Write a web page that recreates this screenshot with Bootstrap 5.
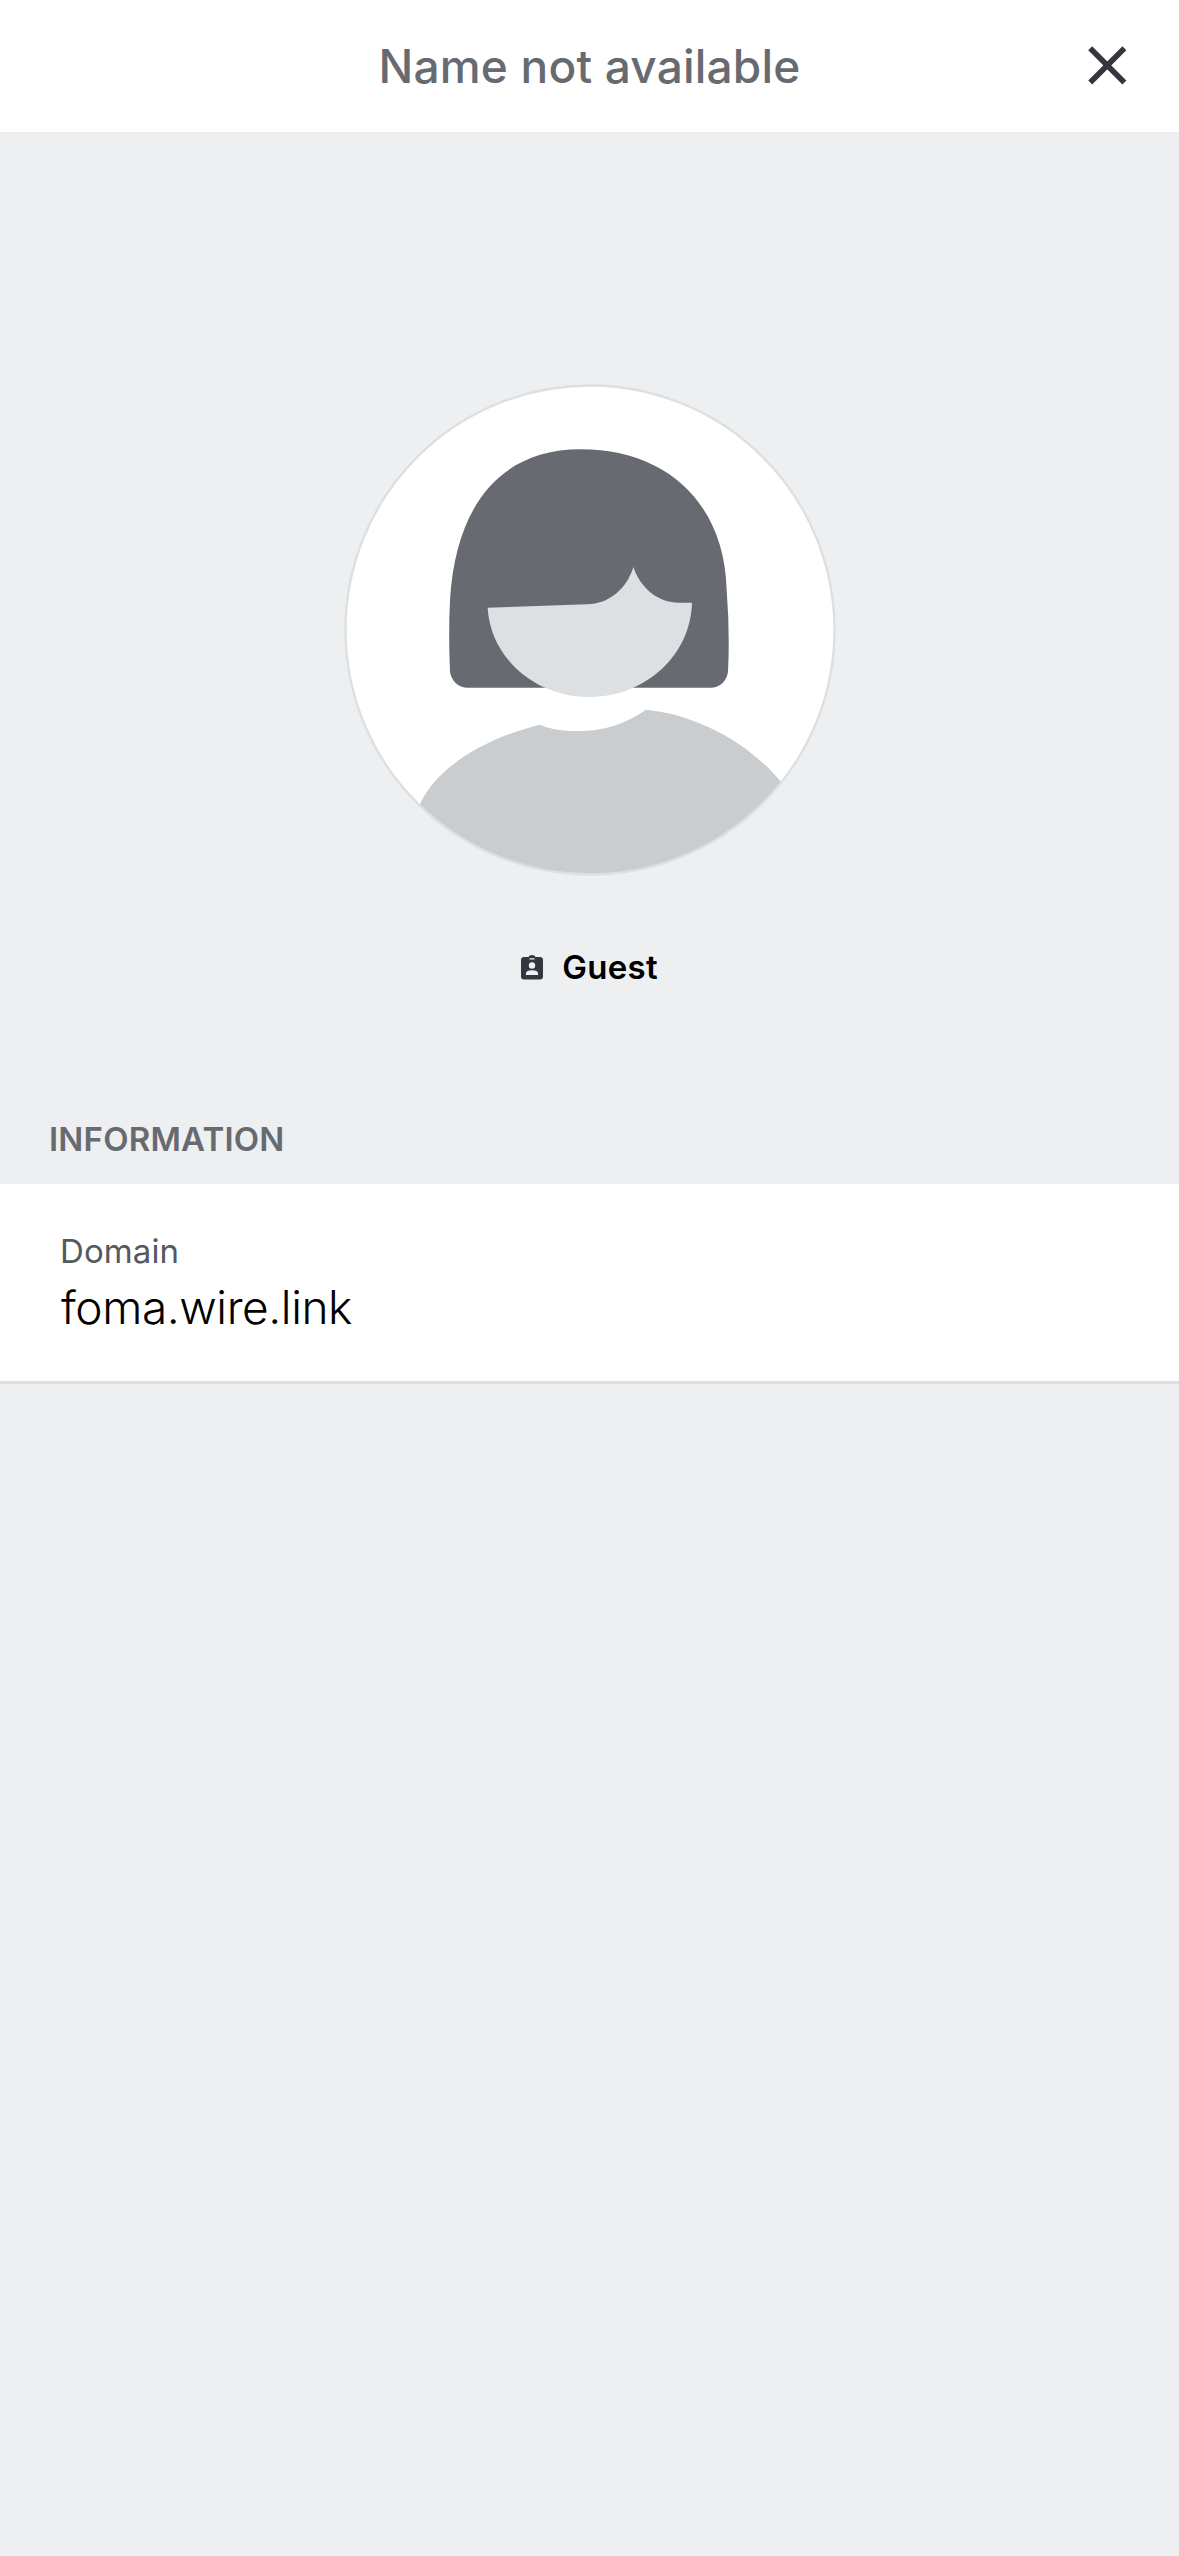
<!DOCTYPE html>
<html lang="en">
<head>
<meta charset="utf-8">
<meta name="viewport" content="width=device-width, initial-scale=1">
<title>Name not available</title>
<link href="https://cdn.jsdelivr.net/npm/bootstrap@5.3.0/dist/css/bootstrap.min.css" rel="stylesheet">
<style>
  body { background: #edeff0; font-family: Inter, "Liberation Sans", sans-serif; color: #000; }
  .top-bar { height: 132px; padding: 0 52px; }
  .top-title { font-size: 46px; line-height: 56px; font-weight: 500; color: #676b71; letter-spacing: 0.2px; }
  .close-btn { width: 39px; height: 39px; margin-bottom: 2px; }
  .side-slot { width: 39px; }
  .profile { padding-top: 252px; }
  .role-row { margin-top: 71px; height: 40px; gap: 19px; }
  .role-text { font-size: 33px; line-height: 40px; font-weight: 600; letter-spacing: 0.3px; }
  .section-title { margin: 132px 0 0; padding: 0 49px 25px; font-size: 33px; line-height: 40px; font-weight: 600; color: #676b71; letter-spacing: 0.2px; }
  .info-cell { padding: 47px 60px 46px; border-bottom: 3px solid #dce0e3; }
  .info-label { font-size: 33px; line-height: 40px; color: #54585f; letter-spacing: 0.1px; }
  .info-value { margin-top: 8px; padding-left: 1px; font-size: 46px; line-height: 56px; font-weight: 300; letter-spacing: -0.42px; }
</style>
</head>
<body>
<header class="top-bar bg-white d-flex align-items-center justify-content-between">
  <span class="side-slot"></span>
  <h1 class="top-title m-0 text-nowrap">Name not available</h1>
  <button type="button" class="close-btn btn p-0 border-0 d-flex" aria-label="Close">
    <svg width="39" height="39" viewBox="0 0 39 39"><path d="M2.200 2.200 36.400 36.400M36.400 2.200 2.200 36.400" stroke="#34373d" stroke-width="5.6" fill="none"/></svg>
  </button>
</header>
<main>
  <section class="profile d-flex flex-column align-items-center">
    <svg width="492" height="492" viewBox="42 42 1476 1476" aria-hidden="true">
      <defs><clipPath id="disc"><circle cx="780" cy="780" r="733"/></clipPath></defs>
      <circle cx="780" cy="780" r="735" fill="#fff"/>
      <path d="M752 238C1012 238 1184 402 1190 660Q1200 790 1194 905C1191 932 1170 953 1142 953H413C384 953 363 930 360 905Q355 790 360 690C378 400 516 238 752 238Z" fill="#676b71"/>
      <path d="M473 713 772 703C836 702 891 656 910 591C932 656 985 698 1047 698H1086C1082 856 946 981 776 981C614 981 481 862 473 713Z" fill="#dce0e3"/>
      <path d="M262 1325C296 1210 448 1107 631 1064Q668 1083 748 1083Q856 1083 948 1019C1100 1033 1266 1122 1362 1247V1530H262Z" fill="#cacdd0" clip-path="url(#disc)"/>
      <circle cx="780" cy="780" r="733.5" fill="none" stroke="#dce0e3" stroke-width="7"/>
    </svg>
    <div class="role-row d-flex align-items-center justify-content-center">
      <svg width="22" height="25" viewBox="0 0 22 25"><path fill="#34373d" fill-rule="evenodd" d="M3 2H7.500Q8 0 11 0T14.500 2H19Q22 2 22 5V21.500Q22 24.500 19 24.500H3Q0 24.500 0 21.500V5Q0 2 3 2ZM8.500 3.300H13.500V4.500H8.500ZM11 7.300A3.200 3.200 0 1 0 11 13.700A3.200 3.200 0 1 0 11 7.300ZM5 20H17V18.500Q17 15.300 11 15.300T5 18.500Z"/></svg>
      <span class="role-text">Guest</span>
    </div>
  </section>
  <h2 class="section-title">INFORMATION</h2>
  <section class="info-cell bg-white">
    <div class="info-label">Domain</div>
    <div class="info-value">foma.wire.link</div>
  </section>
</main>
<script src="https://cdn.jsdelivr.net/npm/bootstrap@5.3.0/dist/js/bootstrap.bundle.min.js"></script>
</body>
</html>
